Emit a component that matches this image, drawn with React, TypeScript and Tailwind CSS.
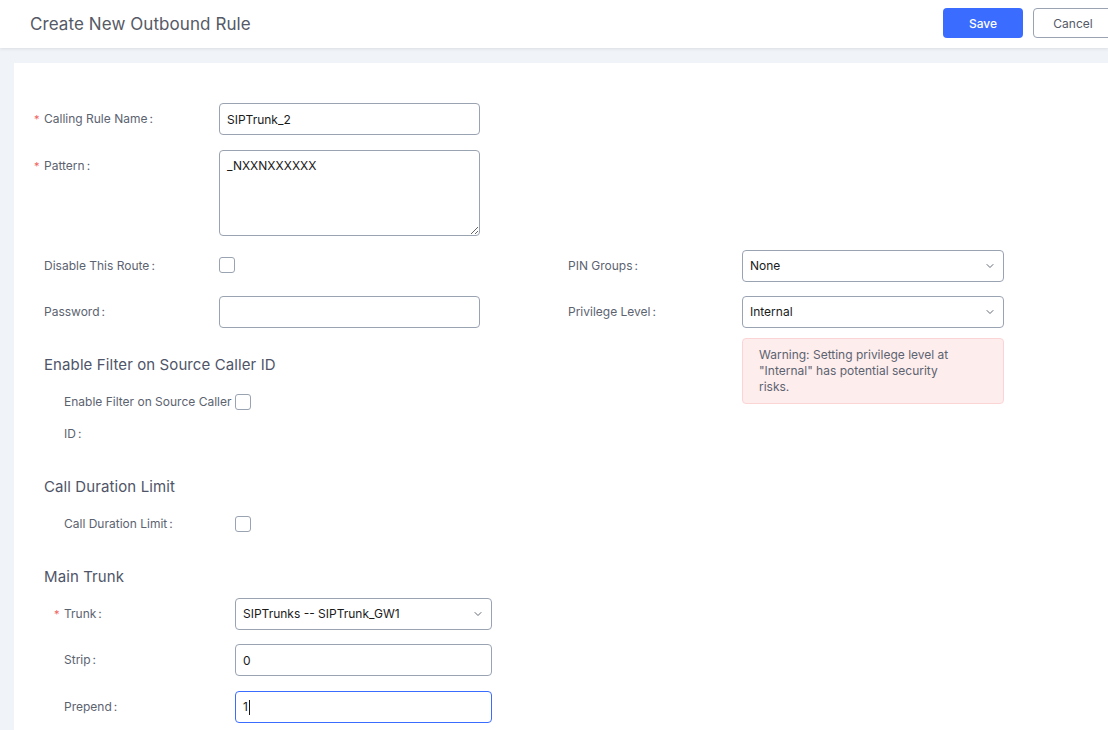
import { ChevronDown } from "lucide-react";

const inputBase = "block h-8 rounded-[4px] border bg-white px-[7px] text-xs text-[#1a1a1a] outline-none";
const inputBox = inputBase + " border-[#9aa3b2]";

function Label({ text, required, className = "" }: { text: string; required?: boolean; className?: string }) {
  return (
    <div className={"shrink-0 text-xs leading-4 text-[#5c6370] " + className}>
      {required && <span className="-ml-[10px] inline-block w-[10px] text-[11px] text-[#f0625f]">*</span>}
      {text}
      <span className="ml-[2px]">:</span>
    </div>
  );
}

function Select({ value, width }: { value: string; width: string }) {
  return (
    <div className={"flex items-center justify-between " + inputBox + " " + width}>
      <span>{value}</span>
      <ChevronDown className="size-3 text-[#4b5563]" strokeWidth={1.75} />
    </div>
  );
}

function Check() {
  return <div className="size-4 rounded-[3px] border border-[#9aa3b2] bg-white" />;
}

function Heading({ children, className = "" }: { children: string; className?: string }) {
  return <h2 className={"text-[15px] leading-6 font-normal tracking-[0.1px] text-[#4f5568] " + className}>{children}</h2>;
}

export default function App() {
  return (
    <div className="h-[730px] overflow-hidden bg-[#f0f4f8] font-['Inter',sans-serif]">
      <header className="flex h-12 items-center justify-between bg-white pl-[30px] shadow-[0_1px_3px_rgba(60,70,90,0.12)]">
        <h1 className="text-[17px] leading-6 font-normal tracking-[0.08px] text-[#555a66]">Create New Outbound Rule</h1>
        <div className="mb-[2px] flex gap-[10px]">
          <button className="h-[30px] w-20 rounded-[4px] bg-[#3a6dff] pt-px text-xs font-medium text-white">Save</button>
          <button className="-mr-[5px] h-[30px] w-20 rounded-[4px] border border-[#9aa3b2] bg-white pt-px text-xs text-[#555a66]">Cancel</button>
        </div>
      </header>

      <main className="mt-[15px] ml-[14px] h-[667px] bg-white pt-10 pl-[30px]">
        <div className="flex items-start">
          <Label text="Calling Rule Name" required className="mt-[8px] w-[175px]" />
          <input readOnly value="SIPTrunk_2" className={inputBox + " w-[261px]"} />
        </div>
        <div className="mt-[15px] flex items-start">
          <Label text="Pattern" required className="mt-[8px] w-[175px]" />
          <textarea readOnly value="_NXXNXXXXXX" className="block h-[86px] w-[261px] rounded-[4px] border border-[#9aa3b2] bg-white px-[7px] py-[7px] text-xs leading-4 text-[#1a1a1a] outline-none" />
        </div>

        <div className="mt-[14px] flex items-start">
          <div className="w-[524px]">
            <div className="flex h-8 items-center">
              <Label text="Disable This Route" className="-mt-[1px] w-[175px]" />
              <div className="-mt-[2px]"><Check /></div>
            </div>
            <div className="mt-[14px] flex items-center">
              <Label text="Password" className="w-[175px]" />
              <input readOnly className={inputBox + " w-[261px]"} />
            </div>

            <Heading className="mt-[25px]">Enable Filter on Source Caller ID</Heading>
            <div className="mt-[9px] ml-5 flex items-start">
              <div className="w-[171px] shrink-0 text-xs leading-8 text-[#5c6370]">
                Enable Filter on Source Caller ID<span className="ml-[2px]">:</span>
              </div>
              <div className="mt-[8px]"><Check /></div>
            </div>

            <Heading className="mt-[25px]">Call Duration Limit</Heading>
            <div className="mt-[17px] ml-5 flex items-center">
              <Label text="Call Duration Limit" className="w-[171px]" />
              <Check />
            </div>

            <Heading className="mt-[33px]">Main Trunk</Heading>
            <div className="mt-[9px] ml-5 flex items-center">
              <Label text="Trunk" required className="w-[171px]" />
              <Select value="SIPTrunks -- SIPTrunk_GW1" width="w-[257px]" />
            </div>
            <div className="mt-[14px] ml-5 flex items-center">
              <Label text="Strip" className="w-[171px]" />
              <input readOnly value="0" className={inputBox + " w-[257px]"} />
            </div>
            <div className="mt-[15px] ml-5 flex items-center">
              <Label text="Prepend" className="w-[171px]" />
              <div className={"flex items-center " + inputBase + " w-[257px] border-[#3a6dff]"}>
                <span>1</span>
                <span className="ml-[1px] h-[15px] w-px bg-[#1a1a1a]" />
              </div>
            </div>
          </div>

          <div className="w-[436px]">
            <div className="flex items-center">
              <Label text="PIN Groups" className="w-[174px]" />
              <Select value="None" width="w-[262px]" />
            </div>
            <div className="mt-[14px] flex items-center">
              <Label text="Privilege Level" className="w-[174px]" />
              <Select value="Internal" width="w-[262px]" />
            </div>
            <div className="mt-[10px] ml-[174px] h-[66px] w-[262px] rounded-[4px] border border-[#fbd5d5] bg-[#feeded] py-2 pr-[50px] pl-4 text-xs leading-4 text-[#5c6370]">
              Warning: Setting privilege level at "Internal" has potential security risks.
            </div>
          </div>
        </div>
      </main>
    </div>
  );
}
